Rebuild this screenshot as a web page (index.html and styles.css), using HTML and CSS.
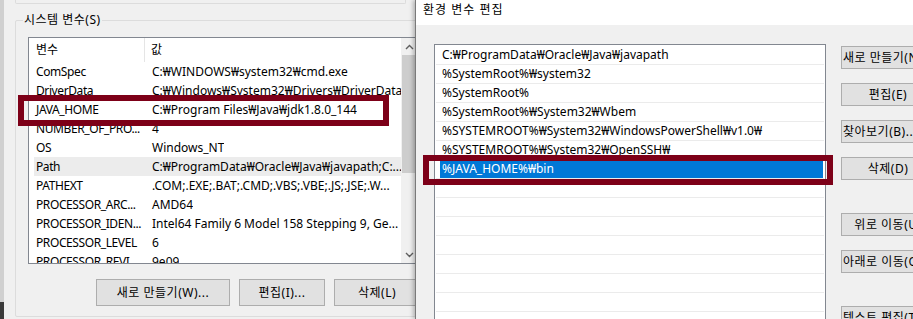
FILE: index.html
```html
<!DOCTYPE html>
<html lang="ko">
<head>
    <meta charset="UTF-8">
    <meta name="viewport" content="width=device-width, initial-scale=1.0">
    <title>환경 변수</title>
    <link rel="stylesheet" href="styles.css">
</head>
<body>
    <div class="desk">
        <div class="edge"></div>

        <!-- 시스템 속성 > 환경 변수 -->
        <div class="win sysvars">
            <div class="prev-group"></div>
            <div class="group">
                <div class="group-title">시스템 변수(S)</div>
                <div class="listview">
                    <div class="lv-main">
                        <div class="lv-head"><span class="c1">변수</span><span class="c2">값</span></div>
                        <div class="lv-row"><span class="c1">ComSpec</span><span class="c2">C:₩WINDOWS₩system32₩cmd.exe</span></div>
                        <div class="lv-row"><span class="c1">DriverData</span><span class="c2">C:₩Windows₩System32₩Drivers₩DriverData</span></div>
                        <div class="lv-row"><span class="c1">JAVA_HOME</span><span class="c2">C:₩Program Files₩Java₩jdk1.8.0_144</span></div>
                        <div class="lv-row"><span class="c1">NUMBER_OF_PRO...</span><span class="c2">4</span></div>
                        <div class="lv-row"><span class="c1">OS</span><span class="c2">Windows_NT</span></div>
                        <div class="lv-row selected"><span class="c1">Path</span><span class="c2">C:₩ProgramData₩Oracle₩Java₩javapath;C:...</span></div>
                        <div class="lv-row"><span class="c1">PATHEXT</span><span class="c2">.COM;.EXE;.BAT;.CMD;.VBS;.VBE;.JS;.JSE;.W...</span></div>
                        <div class="lv-row"><span class="c1">PROCESSOR_ARC...</span><span class="c2">AMD64</span></div>
                        <div class="lv-row"><span class="c1">PROCESSOR_IDEN...</span><span class="c2">Intel64 Family 6 Model 158 Stepping 9, Ge...</span></div>
                        <div class="lv-row"><span class="c1">PROCESSOR_LEVEL</span><span class="c2">6</span></div>
                        <div class="lv-row"><span class="c1">PROCESSOR_REVI...</span><span class="c2">9e09</span></div>
                    </div>
                    <div class="vscroll">
                        <div class="sb-btn">
                            <svg width="9" height="6" viewBox="0 0 9 6"><polyline points="1,5 4.5,1.5 8,5" fill="none" stroke="#606060" stroke-width="1.4"/></svg>
                        </div>
                        <div class="sb-track"><div class="sb-thumb"></div></div>
                        <div class="sb-btn">
                            <svg width="9" height="6" viewBox="0 0 9 6"><polyline points="1,1 4.5,4.5 8,1" fill="none" stroke="#606060" stroke-width="1.4"/></svg>
                        </div>
                    </div>
                </div>
                <div class="btn-row">
                    <div class="btn btn-new">새로 만들기(W)...</div>
                    <div class="btn">편집(I)...</div>
                    <div class="btn">삭제(L)</div>
                </div>
            </div>
        </div>

        <!-- 환경 변수 편집 -->
        <div class="win editvar">
            <div class="titlebar">환경 변수 편집</div>
            <div class="dlg-body">
                <div class="listbox">
                    <div class="lb-row">C:₩ProgramData₩Oracle₩Java₩javapath</div>
                    <div class="lb-row">%SystemRoot%₩system32</div>
                    <div class="lb-row">%SystemRoot%</div>
                    <div class="lb-row">%SystemRoot%₩System32₩Wbem</div>
                    <div class="lb-row">%SYSTEMROOT%₩System32₩WindowsPowerShell₩v1.0₩</div>
                    <div class="lb-row">%SYSTEMROOT%₩System32₩OpenSSH₩</div>
                    <div class="lb-row editing"><div class="edit">%JAVA_HOME%₩bin</div></div>
                    <div class="lb-row"></div>
                    <div class="lb-row"></div>
                    <div class="lb-row"></div>
                    <div class="lb-row"></div>
                    <div class="lb-row"></div>
                    <div class="lb-row"></div>
                    <div class="lb-row"></div>
                    <div class="lb-row"></div>
                </div>
                <div class="btn-col">
                    <div class="btn btn-left">새로 만들기(N)</div>
                    <div class="btn">편집(E)</div>
                    <div class="btn btn-left">찾아보기(B)...</div>
                    <div class="btn">삭제(D)</div>
                    <div class="btn group-start">위로 이동(U)</div>
                    <div class="btn btn-left">아래로 이동(O)</div>
                    <div class="btn btn-left group-start">텍스트 편집(T)...</div>
                </div>
            </div>
        </div>

        <!-- 강조 표시 -->
        <div class="mark mark-home"></div>
        <div class="mark mark-bin"></div>
    </div>
</body>
</html>
```

FILE: styles.css
```css
body {
    margin: 0;
    background: #f0f0f0;
    color: #000;
    font-family: "Noto Sans", "Noto Sans CJK KR", sans-serif;
    font-size: 12px;
}
.desk {
    position: relative;
    width: 913px;
    height: 319px;
    overflow: hidden;
}
.edge {
    position: absolute;
    left: 0;
    top: 0;
    width: 4px;
    height: 319px;
    background: linear-gradient(#d0d0d0 0 302px, #3a3a3a 302px);
}
.win {
    position: absolute;
    top: 0;
    height: 319px;
    background: #f0f0f0;
}

/* left window */
.sysvars {
    left: 4px;
    width: 440px;
}
.prev-group {
    margin-left: 11px;
    width: 389px;
    height: 3px;
    border: 1px solid #dcdcdc;
    border-top: none;
    border-radius: 0 0 2px 2px;
}
.group {
    margin: 16px 0 0 11px;
    width: 420px;
    height: 295px;
    border: 1px solid #dcdcdc;
    border-radius: 2px;
}
.group-title {
    width: fit-content;
    margin: -9px 0 0 7px;
    padding: 0 1px;
    line-height: 16px;
    letter-spacing: 0.5px;
    background: #f0f0f0;
}
.listview {
    display: flex;
    box-sizing: border-box;
    margin: 9px 0 0 12px;
    width: 391px;
    height: 227px;
    border: 1px solid #828790;
    background: #fff;
}
.lv-main {
    flex: 1;
    overflow: hidden;
}
.lv-head {
    display: flex;
    height: 24px;
    line-height: 24px;
    padding-left: 5px;
}
.lv-head .c1 {
    width: 111px;
    padding-left: 2px;
    box-sizing: border-box;
    border-right: 1px solid #e5e5e5;
}
.lv-head .c2 {
    padding-left: 6px;
}
.lv-row {
    display: flex;
    height: 19px;
    line-height: 19px;
    margin-left: 5px;
    white-space: nowrap;
}
.lv-row.selected {
    background: #ececec;
}
.lv-row .c1 {
    width: 112px;
    flex: none;
    padding-left: 2px;
    box-sizing: border-box;
    letter-spacing: -0.4px;
}
.lv-row .c2 {
    padding-left: 6px;
    overflow: hidden;
}
.vscroll {
    display: flex;
    flex-direction: column;
    flex: none;
    width: 17px;
    background: #f0f0f0;
}
.sb-btn {
    display: flex;
    align-items: center;
    justify-content: center;
    height: 17px;
}
.sb-track {
    flex: 1;
}
.sb-thumb {
    height: 118px;
    margin: 0 1px;
    background: #cdcdcd;
}
.btn-row {
    display: flex;
    gap: 9px;
    margin: 15px 0 0 80px;
}
.btn-row .btn {
    flex: none;
    width: 86px;
    height: 27px;
    line-height: 25px;
}
.btn-row .btn-new {
    width: 134px;
}
.btn {
    box-sizing: border-box;
    border: 1px solid #adadad;
    background: #e1e1e1;
    text-align: center;
    white-space: nowrap;
    letter-spacing: 0.5px;
    overflow: hidden;
}

/* right window */
.editvar {
    left: 415px;
    width: 540px;
    border-left: 1px solid #7a7a7a;
    box-shadow: -2px 0 4px rgba(0, 0, 0, 0.25);
}
.titlebar {
    height: 25px;
    padding-left: 7px;
    line-height: 20px;
    letter-spacing: 1px;
    background: #fff;
}
.dlg-body {
    display: flex;
    gap: 15px;
    padding: 19px 0 0 18px;
}
.listbox {
    flex: none;
    box-sizing: border-box;
    width: 392px;
    height: 300px;
    padding-top: 1px;
    border: 1px solid #828790;
    background: #fff;
}
.lb-row {
    box-sizing: border-box;
    height: 19px;
    margin: 0 1px;
    padding-left: 6px;
    line-height: 18px;
    border-bottom: 1px solid #ebebeb;
    white-space: nowrap;
}
.lb-row.editing {
    padding-left: 4px;
}
.edit {
    height: 18px;
    margin-right: 1px;
    padding-left: 2px;
    background: #0078d7;
    color: #fff;
}
.btn-col {
    display: flex;
    flex-direction: column;
    flex: none;
    gap: 14px;
    width: 94px;
    margin-top: 2px;
}
.btn-col .btn {
    height: 23px;
    line-height: 21px;
    padding: 0 1px;
}
.btn-col .btn-left {
    text-align: left;
}
.btn-col .group-start {
    margin-top: 19px;
}

/* red highlight boxes */
.mark {
    position: absolute;
    box-sizing: border-box;
    border: 6px solid #7d0018;
}
.mark-home {
    left: 18px;
    top: 95px;
    width: 371px;
    height: 31px;
}
.mark-bin {
    left: 423px;
    top: 155px;
    width: 410px;
    height: 30px;
}
```
